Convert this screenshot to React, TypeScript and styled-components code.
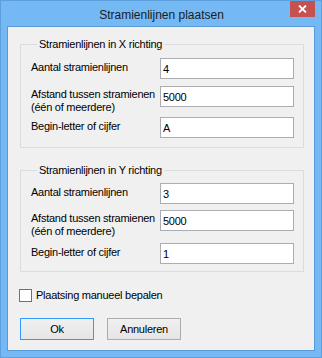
import React from "react";
import styled, { createGlobalStyle } from "styled-components";

const GlobalStyle = createGlobalStyle`
  html, body { margin: 0; padding: 0; background: #ffffff; }
  body { font-family: "Liberation Sans", Arial, sans-serif; }
  * { box-sizing: border-box; }
`;

const Window = styled.div`
  width: 322px;
  height: 358px;
  background: #74b8f4;
  border: 1px solid #5d9fdd;
  padding: 0 6px 6px;
  display: flex;
  flex-direction: column;
`;

const TitleBar = styled.div`
  height: 25px;
  margin: 0 -6px;
  padding: 0 6px 0 7px;
  display: grid;
  grid-template-columns: 1fr auto 1fr;
  align-items: start;
`;

const Title = styled.div`
  grid-column: 2;
  font-size: 12px;
  line-height: 14px;
  padding-top: 7px;
  color: #1b1b1b;
  white-space: nowrap;
`;

const CloseButton = styled.div`
  grid-column: 3;
  justify-self: end;
  width: 25px;
  height: 16px;
  background: #c75050;
  display: flex;
  align-items: center;
  justify-content: center;
`;

const Client = styled.div`
  flex: 1;
  background: #f0f0f0;
  border: 1px solid #5a9ad6;
  padding: 11px 10px 0 11px;
  display: flex;
  flex-direction: column;
`;

const Group = styled.fieldset<{ $top: number; $bottom: number }>`
  margin: ${(p) => p.$top}px 0 0 1px;
  padding: 0 9px ${(p) => p.$bottom}px 10px;
  border: 1px solid #dcdcdc;
  min-width: 0;
  display: flex;
  flex-direction: column;
`;

const Legend = styled.legend`
  margin-left: 6px;
  padding: 0 2px;
  font-size: 11px;
  line-height: 13px;
  letter-spacing: -0.25px;
  color: #000;
`;

const Row = styled.div<{ $gap: number }>`
  margin-top: ${(p) => p.$gap}px;
  height: 21px;
  display: flex;
  align-items: center;
  justify-content: space-between;
`;

const Label = styled.div<{ $multi?: boolean }>`
  font-size: 11px;
  line-height: 13px;
  letter-spacing: -0.25px;
  color: #000;
  align-self: ${(p) => (p.$multi ? "flex-start" : "center")};
  padding-top: ${(p) => (p.$multi ? "2px" : "0")};
  margin-top: ${(p) => (p.$multi ? "0" : "-2px")};
  white-space: nowrap;
`;

const Input = styled.input`
  width: 134px;
  height: 21px;
  border: 1px solid #abadb3;
  background: #fff;
  padding: 0 2px;
  font-family: "Liberation Sans", Arial, sans-serif;
  font-size: 11px;
  letter-spacing: -0.25px;
  color: #000;
  outline: none;
`;

const CheckRow = styled.label`
  margin-top: 17px;
  margin-left: 0;
  display: flex;
  align-items: center;
  gap: 4px;
  font-size: 11px;
  line-height: 13px;
  letter-spacing: -0.25px;
  color: #000;
`;

const CheckBox = styled.span`
  width: 13px;
  height: 13px;
  border: 1px solid #707070;
  background: #fff;
  display: inline-block;
`;

const ButtonRow = styled.div`
  margin-top: 16px;
  margin-left: 1px;
  display: flex;
  gap: 13px;
`;

const Button = styled.button<{ $default?: boolean }>`
  width: 74px;
  height: 22px;
  border: 1px solid ${(p) => (p.$default ? "#3399ff" : "#acacac")};
  background: linear-gradient(#f0f0f0, #e5e5e5);
  font-family: "Liberation Sans", Arial, sans-serif;
  font-size: 11px;
  letter-spacing: -0.25px;
  color: #000;
  padding: 0;
`;

type Field = { label: string; value: string; multi?: boolean; gap: number };

const groups: { title: string; top: number; bottom: number; fields: Field[] }[] = [
  {
    title: "Stramienlijnen in X richting",
    top: 0,
    bottom: 9,
    fields: [
      { label: "Aantal stramienlijnen", value: "4", gap: 7 },
      { label: "Afstand tussen stramienen\n(één of meerdere)", value: "5000", multi: true, gap: 7 },
      { label: "Begin-letter of cijfer", value: "A", gap: 10 },
    ],
  },
  {
    title: "Stramienlijnen in Y richting",
    top: 16,
    bottom: 7,
    fields: [
      { label: "Aantal stramienlijnen", value: "3", gap: 6 },
      { label: "Afstand tussen stramienen\n(één of meerdere)", value: "5000", multi: true, gap: 6 },
      { label: "Begin-letter of cijfer", value: "1", gap: 12 },
    ],
  },
];

export default function App() {
  return (
    <>
      <GlobalStyle />
      <Window>
        <TitleBar>
          <Title>Stramienlijnen plaatsen</Title>
          <CloseButton>
            <svg width="9" height="8" viewBox="0 0 9 8">
              <path d="M1 0.5 L8 7.5 M8 0.5 L1 7.5" stroke="#ffffff" strokeWidth="1.8" />
            </svg>
          </CloseButton>
        </TitleBar>
        <Client>
          {groups.map((g) => (
            <Group key={g.title} $top={g.top} $bottom={g.bottom}>
              <Legend>{g.title}</Legend>
              {g.fields.map((f) => (
                <Row key={f.label} $gap={f.gap}>
                  <Label $multi={f.multi}>
                    {f.label.split("\n").map((line) => (
                      <div key={line}>{line}</div>
                    ))}
                  </Label>
                  <Input defaultValue={f.value} />
                </Row>
              ))}
            </Group>
          ))}
          <CheckRow>
            <CheckBox />
            Plaatsing manueel bepalen
          </CheckRow>
          <ButtonRow>
            <Button $default>Ok</Button>
            <Button>Annuleren</Button>
          </ButtonRow>
        </Client>
      </Window>
    </>
  );
}
